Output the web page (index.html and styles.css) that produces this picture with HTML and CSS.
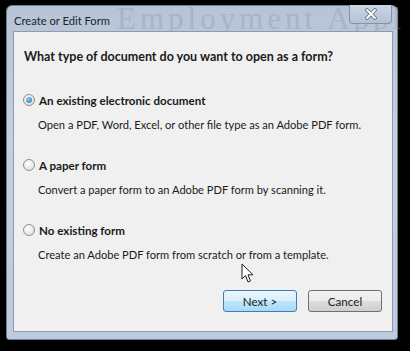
FILE: index.html
```html
<!doctype html>
<html>

<head>
    <meta charset="UTF-8">
    <title>Create or Edit Form</title>
    <link rel="stylesheet" href="styles.css">
</head>

<body>
    <div class="window">
        <div class="titlebar">
            <span class="ghost">Employment Appl</span>
            <span class="title">Create or Edit Form</span>
            <span class="close">
                <svg width="14" height="12" viewBox="0 0 14 12">
                    <path d="M3 2 L11 10 M11 2 L3 10" stroke="#5a6878" stroke-width="3.6" stroke-linecap="round"/>
                    <path d="M3 2 L11 10 M11 2 L3 10" stroke="#ffffff" stroke-width="2" stroke-linecap="round"/>
                </svg>
            </span>
        </div>
        <div class="client">
            <p class="question">What type of document do you want to open as a form?</p>

            <div class="option">
                <div class="label"><span class="radio checked"></span>An existing electronic document</div>
                <p class="desc">Open a PDF, Word, Excel, or other file type as an Adobe PDF form.</p>
            </div>
            <div class="option">
                <div class="label"><span class="radio"></span>A paper form</div>
                <p class="desc">Convert a paper form to an Adobe PDF form by scanning it.</p>
            </div>
            <div class="option">
                <div class="label"><span class="radio"></span>No existing form</div>
                <p class="desc">Create an Adobe PDF form from scratch or from a template.</p>
            </div>

            <div class="buttons">
                <button class="btn default">Next &gt;</button>
                <button class="btn">Cancel</button>
            </div>

            <svg class="cursor" width="13" height="21" viewBox="0 0 13 21">
                <path d="M1 1 L1 16 L4.5 12.5 L7 19 L9.5 18 L7 11.8 L12 11.8 Z" fill="#fff" stroke="#222" stroke-width="1"/>
            </svg>
        </div>
    </div>
</body>

</html>
```

FILE: styles.css
```css
* {
    margin: 0;
    padding: 0;
    box-sizing: border-box;
}

body {
    background: #000;
    font-family: Lato, "Open Sans", sans-serif;
    font-size: 11.1px;
    color: #1a1a1a;
}

.window {
    margin: 5px 0 0 6px;
    width: 392px;
    height: 335px;
    padding: 0 4px 7px 6px;
    background: linear-gradient(180deg, #b6c4d6 0%, #c3d0e0 40%, #bccbdd 100%);
    border: 1px solid #6f7f92;
    border-radius: 6px 6px 3px 3px;
    display: flex;
    flex-direction: column;
}

.titlebar {
    position: relative;
    flex-shrink: 0;
    height: 25px;
    display: flex;
    align-items: center;
}

.ghost {
    position: absolute;
    left: 104px;
    top: -4px;
    font-family: "Liberation Serif", serif;
    font-size: 31px;
    line-height: 34px;
    letter-spacing: 4px;
    color: #8e9db3;
    opacity: .4;
    white-space: nowrap;
}

.title {
    position: relative;
    padding: 3px 0 0 1px;
    font-size: 11.2px;
    color: #1b2430;
}

.close {
    position: absolute;
    right: 1px;
    top: -1px;
    width: 43px;
    height: 19px;
    border: 1px solid #8593a6;
    border-top: 0;
    border-radius: 0 0 4px 4px;
    background: linear-gradient(180deg, #cbd6e3, #b3c2d5);
    display: flex;
    align-items: center;
    justify-content: center;
}

.client {
    position: relative;
    z-index: 1;
    flex: 1;
    background: #f0f0f0;
    border: 1px solid #8d9bac;
    padding: 17px 10px 19px 10px;
    display: flex;
    flex-direction: column;
}

.question {
    font-weight: bold;
    font-size: 12.5px;
    line-height: 16px;
    margin-bottom: 27px;
}

.option {
    margin-bottom: 24px;
}

.option:last-of-type {
    margin-bottom: 0;
}

.label {
    display: flex;
    align-items: center;
    font-weight: bold;
    font-size: 11.6px;
    height: 16px;
}

.radio {
    width: 12px;
    height: 12px;
    border-radius: 50%;
    border: 1px solid #8f8f8f;
    background: radial-gradient(circle at 40% 35%, #fff, #d8d8d8);
    margin: 0 4px 0 -1px;
    display: flex;
    align-items: center;
    justify-content: center;
}

.radio.checked::after {
    content: "";
    width: 6px;
    height: 6px;
    border-radius: 50%;
    background: radial-gradient(circle at 35% 35%, #8fd0f4, #1c6fa6);
}

.desc {
    line-height: 16px;
    margin: 9px 0 0 14px;
}

.buttons {
    margin-top: auto;
    display: flex;
    justify-content: flex-end;
    gap: 11px;
}

.btn {
    width: 74px;
    height: 22px;
    font-family: inherit;
    font-size: 11.6px;
    color: #1a1a1a;
    border: 1px solid #707070;
    border-radius: 3px;
    background: linear-gradient(180deg, #f2f2f2 0%, #ebebeb 50%, #dddddd 51%, #cfcfcf 100%);
}

.btn.default {
    border-color: #3c7fb1;
    background: linear-gradient(180deg, #eaf6fd 0%, #d9f0fc 50%, #bee6fd 51%, #a7d9f5 100%);
}

.cursor {
    position: absolute;
    left: 227px;
    top: 231px;
}
```
